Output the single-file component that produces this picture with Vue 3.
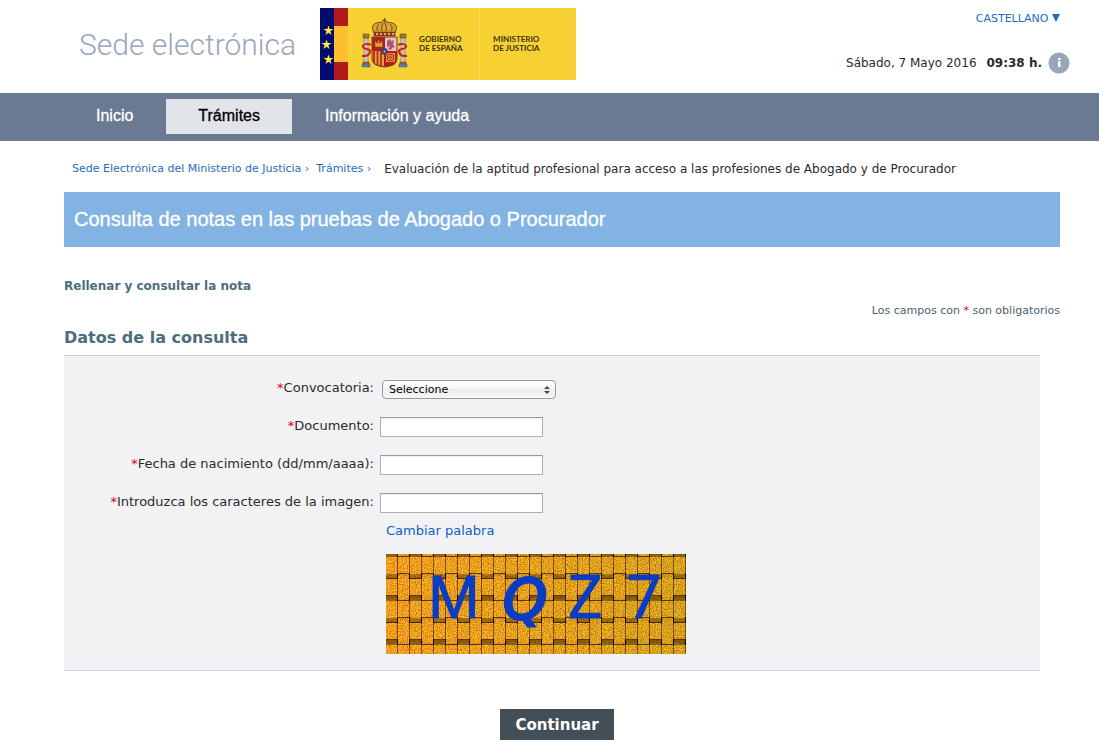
<script setup>
import { ref } from 'vue';

const menu = [
    { name: 'Inicio', active: false },
    { name: 'Trámites', active: true },
    { name: 'Información y ayuda', active: false }
];

const fields = [
    { id: 'documento', label: 'Documento:' },
    { id: 'fecha', label: 'Fecha de nacimiento (dd/mm/aaaa):' },
    { id: 'captcha', label: 'Introduzca los caracteres de la imagen:' }
];

const convocatoria = ref('');
const form = ref({ documento: '', fecha: '', captcha: '' });
</script>

<template>
    <div class="page">
        <header class="header">
            <div class="brand">
                <span class="site-name">Sede electrónica</span>
                <div class="logo">
                    <svg class="emblem" viewBox="0 0 94 72" aria-hidden="true">
                        <rect width="94" height="72" fill="#f7d033" />
                        <rect width="14" height="72" fill="#000b6d" />
                        <rect x="14" width="14" height="72" fill="#b01a1d" />
                        <rect x="14" y="18" width="14" height="36" fill="#fbc02f" />
                        <g fill="#ffec3d">
                            <path id="star" d="M8.500 17.500l1.200 3.600h3.800l-3.100 2.200 1.200 3.700-3.100-2.300-3.100 2.300 1.200-3.700-3.100-2.200h3.800z" />
                            <use href="#star" x="-2" y="14" />
                            <use href="#star" y="29" />
                        </g>
                        <!-- columns -->
                        <g fill="#c9c9bd" stroke="#77705a" stroke-width=".6">
                            <rect x="44" y="30" width="4" height="26" />
                            <rect x="81" y="30" width="4" height="26" />
                        </g>
                        <g fill="#a8782a" stroke="#5a3615" stroke-width=".5">
                            <path d="M43 26h6v4h-6zM80 26h6v4h-6zM43 54h6v2h-6zM80 54h6v2h-6z" />
                        </g>
                        <path d="M42 56h8v3h-8zM79 56h8v3h-8z" fill="#5784a5" stroke="#456" stroke-width=".5" />
                        <g fill="none" stroke="#c8202c" stroke-width="2">
                            <path d="M51 37c-3-2-9-1-8 2s8 1 7 5-4 4-8 4" />
                            <path d="M78 37c3-2 9-1 8 2s-8 1-7 5 4 4 8 4" />
                        </g>
                        <!-- crown -->
                        <path d="M55 26c-4-5-3-10 2-11 2-1 4 0 5-1 1-2 4-2 5 0 1 1 3 0 5 1 5 1 6 6 2 11z" fill="#d8a42a" stroke="#65461a" />
                        <path d="M58 23c-2-3-1-5 1-7M62 23c-1-3 0-5 1-8M66 23c1-3 0-5-1-8M71 23c2-3 1-5-1-7" fill="none" stroke="#814020" />
                        <path d="M54 24h21v4H54z" fill="#9c3024" stroke="#604317" stroke-width=".6" />
                        <path d="M64.500 10v5M62.500 12h4" stroke="#6d5020" stroke-width="1" />
                        <g fill="#f5d870">
                            <circle cx="57" cy="26" r="1" /><circle cx="61" cy="26" r="1" />
                            <circle cx="65" cy="26" r="1" /><circle cx="69" cy="26" r="1" /><circle cx="73" cy="26" r="1" />
                        </g>
                        <!-- shield -->
                        <path d="M52 29h25v21c0 6-4 8-12.500 9C56 58 52 56 52 50z" fill="#b71925" stroke="#6d4824" />
                        <path d="M65 29.500h11.500V43H65z" fill="#dbc9cc" />
                        <path d="M67 33l3-2 1 2 3-1-1 4 2 3-3 1-1 2-3-1 2-3-3 1z" fill="#b85074" />
                        <path d="M55 39v-6h1.500v2H58v-3h1.500v3H61v-2h1.500v6z" fill="#dda72d" stroke="#7b4413" stroke-width=".5" />
                        <path d="M52.500 43H64v15c-7-1-11-2-11.500-8z" fill="#deaa2c" />
                        <path d="M54 43v12M57.500 43v14M61 43v15" stroke="#b71925" stroke-width="1.600" />
                        <g fill="none" stroke="#dda72d" stroke-width=".9">
                            <path d="M66.500 45.500h8v8h-8zM66.500 45.500l8 8M74.500 45.500l-8 8" />
                            <circle cx="70.500" cy="49.500" r="2.400" />
                        </g>
                        <circle cx="64.500" cy="43.500" r="3" fill="#1d4f99" stroke="#7c3047" />
                        <path d="M63 43.500h3M64.500 42v3" stroke="#d6b64c" stroke-width=".6" />
                    </svg>
                    <div class="logo-name gobierno">GOBIERNO<br>DE ESPAÑA</div>
                    <div class="logo-name ministerio">MINISTERIO<br>DE JUSTICIA</div>
                </div>
            </div>
            <div class="header-info">
                <a href="#" class="language">CASTELLANO
                    <svg width="8" height="8" viewBox="0 0 8 8" aria-hidden="true"><path d="M0 0h8L4 8z" fill="#1d6dbd" /></svg>
                </a>
                <div class="date">
                    <span>Sábado, 7 Mayo 2016</span>
                    <strong>09:38 h.</strong>
                    <svg width="22" height="22" viewBox="0 0 22 22" aria-hidden="true">
                        <circle cx="11" cy="11" r="10.500" fill="#99a6ba" />
                        <path d="M10 6h2.500v2H10zM10 9h2.500v6H10z" fill="#fff" />
                    </svg>
                </div>
            </div>
        </header>

        <nav class="nav">
            <a v-for="item in menu" :key="item.name" href="#" :class="{ active: item.active }">{{ item.name }}</a>
        </nav>

        <main class="content">
            <div class="breadcrumb">
                <a href="#">Sede Electrónica del Ministerio de Justicia ›</a>
                <a href="#">Trámites ›</a>
                <span>Evaluación de la aptitud profesional para acceso a las profesiones de Abogado y de Procurador</span>
            </div>
            <h1>Consulta de notas en las pruebas de Abogado o Procurador</h1>
            <h2>Rellenar y consultar la nota</h2>
            <p class="required-note">Los campos con <span class="red">*</span> son obligatorios</p>
            <h3>Datos de la consulta</h3>

            <form @submit.prevent>
                <div class="fields">
                    <div class="row">
                        <label for="convocatoria"><span class="asterisk">*</span>Convocatoria:</label>
                        <div class="select-box">
                            <select id="convocatoria" v-model="convocatoria">
                                <option value="">Seleccione</option>
                            </select>
                            <svg class="arrows" width="6" height="8" viewBox="0 0 6 8" aria-hidden="true">
                                <path d="M0 3l3-3 3 3zM0 5h6L3 8z" fill="#444" />
                            </svg>
                        </div>
                    </div>
                    <div v-for="field in fields" :key="field.id" class="row">
                        <label :for="field.id"><span class="asterisk">*</span>{{ field.label }}</label>
                        <input :id="field.id" v-model="form[field.id]" type="text">
                    </div>
                    <div class="captcha">
                        <a href="#">Cambiar palabra</a>
                        <svg width="300" height="100" viewBox="0 0 300 100" role="img">
                            <defs>
                                <linearGradient id="base">
                                    <stop offset="0" stop-color="#fa9a22" />
                                    <stop offset=".4" stop-color="#eb9f20" />
                                    <stop offset="1" stop-color="#cf9f1c" />
                                </linearGradient>
                                <linearGradient id="shade" x2="0" y2="1">
                                    <stop offset="0" stop-color="#301800" stop-opacity=".55" />
                                    <stop offset="1" stop-color="#301800" stop-opacity="0" />
                                </linearGradient>
                                <linearGradient id="shade-up" x2="0" y2="1">
                                    <stop offset="0" stop-color="#301800" stop-opacity="0" />
                                    <stop offset="1" stop-color="#301800" stop-opacity=".45" />
                                </linearGradient>
                                <pattern id="weave" width="24" height="44" y="-3" patternUnits="userSpaceOnUse">
                                    <path d="M11.500 0v44M23.500 0v44" stroke="#3c1c00" stroke-opacity=".6" />
                                    <path d="M0 .500h12M12 5.500h12M12 22.500h12M0 27.500h12" stroke="#351700" stroke-opacity=".75" />
                                    <path d="M0 1h12v5H0zM12 23h12v5H12z" fill="url(#shade)" />
                                    <path d="M12 1h12v5H12zM0 23h12v5H0z" fill="url(#shade-up)" />
                                    <path d="M11 0h1v6h-1zM23 0h1v6h-1zM11 22h1v6h-1zM23 22h1v6h-1z" fill="#1b0500" />
                                </pattern>
                                <filter id="grain" x="0" y="0" width="100%" height="100%" color-interpolation-filters="sRGB">
                                    <feTurbulence type="fractalNoise" baseFrequency=".85" numOctaves="2" seed="7" />
                                    <feColorMatrix values=".6 .8 0 0 .2  0 2.400 0 0 -.55  0 0 .6 0 -.2  0 0 0 0 1" />
                                </filter>
                            </defs>
                            <rect width="300" height="100" fill="url(#base)" />
                            <rect width="300" height="100" filter="url(#grain)" opacity=".4" />
                            <rect width="300" height="100" fill="url(#weave)" />
                            <g class="letters">
                                <text x="42" y="64" class="letter-m">M</text>
                                <text x="117" y="64" class="letter-q">Q</text>
                                <text x="182" y="64">Z</text>
                                <text x="241" y="64">7</text>
                            </g>
                        </svg>
                    </div>
                </div>
                <div class="actions">
                    <button type="submit">Continuar</button>
                </div>
            </form>
        </main>
    </div>
</template>

<style>
body {
    margin: 0;
    background-color: #fff;
}
</style>

<style scoped>
.page {
    font-family: Verdana, "DejaVu Sans", sans-serif;
    font-size: 12px;
    color: #2b2b2b;
}

a {
    color: #1d6dbd;
    text-decoration: none;
}

.header {
    display: flex;
    justify-content: space-between;
    height: 93px;
    padding: 0 29px 0 79px;
    box-sizing: border-box;
}

.brand {
    display: flex;
    align-items: flex-start;
    gap: 24px;
    padding-top: 8px;
}

.site-name {
    font-family: Roboto, sans-serif;
    font-size: 30px;
    font-weight: 300;
    line-height: 74px;
    color: #98a7bb;
}

.logo {
    display: flex;
    align-items: center;
    width: 256px;
    height: 72px;
    background-color: #f7d033;
}

.emblem {
    width: 94px;
    height: 72px;
}

.logo-name {
    display: flex;
    align-items: center;
    height: 72px;
    box-sizing: border-box;
    font-family: Lato, sans-serif;
    font-size: 8px;
    font-weight: 700;
    line-height: 9px;
    color: #3b3215;
}

.gobierno {
    width: 66px;
    padding-left: 5px;
    border-right: 1px solid #fbe04e;
}

.ministerio {
    padding-left: 13px;
}

.header-info {
    display: flex;
    flex-direction: column;
    align-items: flex-end;
    padding-top: 10px;
}

.language {
    margin-right: 10px;
    font-size: 11px;
    line-height: 17px;
}

.date {
    display: flex;
    align-items: center;
    margin-top: 25px;
    font-size: 12px;
    line-height: 22px;
}

.date strong {
    margin: 0 6px 0 10px;
}

.nav {
    display: flex;
    align-items: flex-start;
    gap: 1px;
    height: 48px;
    padding: 6px 0 0 64px;
    box-sizing: border-box;
    background-color: #697a92;
    font-family: Arial, "Liberation Sans", sans-serif;
    font-size: 16px;
}

.nav a {
    padding: 0 32px 2px;
    line-height: 33px;
    color: #fff;
    -webkit-text-stroke: 0.3px;
}

.nav a.active {
    background-color: #e1e4e9;
    color: #000;
}

.content {
    padding: 0 39px 0 64px;
}

.breadcrumb {
    display: flex;
    align-items: center;
    height: 51px;
    padding: 4px 0 0 8px;
    box-sizing: border-box;
    line-height: 16px;
}

.breadcrumb a {
    margin-right: 7px;
    font-size: 11px;
}

.breadcrumb span {
    margin-left: 6px;
}

h1 {
    margin: 0;
    padding-left: 10px;
    background-color: #82b3e3;
    font-family: Arial, "Liberation Sans", sans-serif;
    font-size: 20px;
    font-weight: 400;
    line-height: 55px;
    color: #fff;
    -webkit-text-stroke: 0.3px;
}

h2 {
    margin: 31px 0 0;
    font-size: 12px;
    line-height: 16px;
    color: #4c6e7c;
}

.required-note {
    margin: 9px 0 0;
    font-size: 11px;
    line-height: 16px;
    text-align: right;
    color: #4c6270;
}

.red {
    color: #d0021b;
}

h3 {
    margin: 9px 0 7px;
    font-size: 16px;
    line-height: 20px;
    color: #4c6e7c;
}

.fields {
    margin-right: 20px;
    padding: 23px 0 16px;
    border-top: 1px solid #c5d5db;
    border-bottom: 1px solid #c5d8e2;
    background-color: #f2f2f4;
}

.row {
    display: flex;
    gap: 6px;
    height: 20px;
    font-size: 13px;
}

.row + .row {
    margin-top: 18px;
}

label {
    width: 310px;
    line-height: 18px;
    text-align: right;
}

.asterisk {
    color: #e3001b;
}

.row input {
    width: 163px;
    height: 20px;
    box-sizing: border-box;
    border: 1px solid #b0b0b0;
    border-top-color: #999;
    background-color: #fff;
    box-shadow: inset 0 1px 1px #eee;
}

.select-box {
    position: relative;
    margin: 1px 0 0 2px;
}

select {
    display: block;
    width: 174px;
    height: 19px;
    padding: 0 6px;
    border: 1px solid #999;
    border-radius: 4px;
    appearance: none;
    background: linear-gradient(#fff, #f6f6f6 50%, #ececec 50%, #f8f8f8);
    font-family: "Lucida Grande", "DejaVu Sans", sans-serif;
    font-size: 11px;
    color: #000;
}

.arrows {
    position: absolute;
    top: 6px;
    right: 6px;
    pointer-events: none;
}

.captcha {
    display: flex;
    flex-direction: column;
    align-items: flex-start;
    margin-top: 10px;
    padding-left: 322px;
    font-size: 13px;
}

.captcha a {
    margin-bottom: 15px;
    line-height: 16px;
    color: #0b61c4;
}

.letters {
    font-family: "Noto Sans", sans-serif;
    font-size: 60px;
    fill: #0a3cc4;
    stroke: #0a3cc4;
    stroke-width: 1;
}

.letter-m {
    font-family: "Liberation Sans", sans-serif;
    font-size: 62px;
}

.letter-q {
    font-family: "DejaVu Sans", sans-serif;
    font-size: 56px;
    font-style: italic;
    stroke-width: 3;
}

.actions {
    display: flex;
    justify-content: center;
    padding: 38px 10px 5px 0;
}

button {
    height: 31px;
    padding: 0 15px;
    border: 0;
    background-color: #434e57;
    font-family: Verdana, "DejaVu Sans", sans-serif;
    font-size: 15px;
    font-weight: 700;
    color: #fff;
}
</style>
